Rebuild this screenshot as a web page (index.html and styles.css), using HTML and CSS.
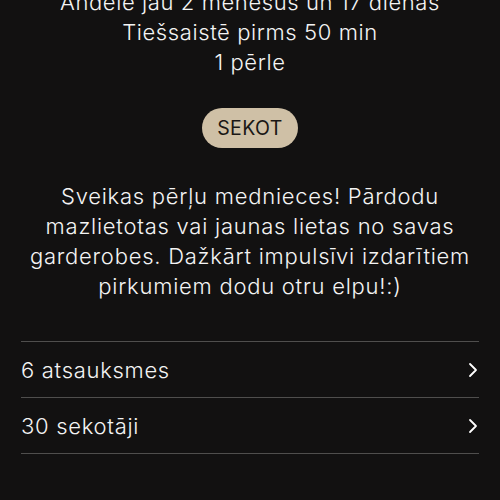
FILE: index.html
```html
<!DOCTYPE html>
<html lang="lv">
<head>
<meta charset="utf-8">
<link rel="stylesheet" href="styles.css">
</head>
<body>
<main class="profile">
  <div class="meta">
    <div>Andelē jau 2 mēnešus un 17 dienas</div>
    <div>Tiešsaistē pirms 50 min</div>
    <div>1 pērle</div>
  </div>
  <button class="follow">SEKOT</button>
  <p class="bio">Sveikas pērļu mednieces! Pārdodu mazlietotas vai jaunas lietas no savas garderobes. Dažkārt impulsīvi izdarītiem pirkumiem dodu otru elpu!:)</p>
  <ul class="links">
    <li class="row"><span>6 atsauksmes</span>
      <svg class="chev" width="10" height="16" viewBox="0 0 10 16"><path d="M2 2 L8 8 L2 14" fill="none" stroke="#fff" stroke-width="1.8" stroke-linecap="round" stroke-linejoin="round"/></svg>
    </li>
    <li class="row"><span>30 sekotāji</span>
      <svg class="chev" width="10" height="16" viewBox="0 0 10 16"><path d="M2 2 L8 8 L2 14" fill="none" stroke="#fff" stroke-width="1.8" stroke-linecap="round" stroke-linejoin="round"/></svg>
    </li>
  </ul>
</main>
</body>
</html>
```
FILE: styles.css
```css
html, body {
  margin: 0;
  padding: 0;
  background: #121111;
  height: 100%;
  overflow: hidden;
}
body {
  font-family: Inter, "Noto Sans", sans-serif;
  font-weight: 300;
  color: #f4f4f4;
}
.profile {
  display: flex;
  flex-direction: column;
  align-items: center;
  padding: 0 21px;
}
.meta {
  margin-top: -13px;
  font-size: 22px;
  letter-spacing: 0.6px;
  line-height: 30px;
  text-align: center;
  white-space: nowrap;
}
.follow {
  margin-top: 31px;
  width: 96px;
  height: 40px;
  border: none;
  border-radius: 20px;
  background: #cfc0a6;
  color: #1a1715;
  font-family: Inter, sans-serif;
  font-weight: 400;
  font-size: 19.5px;
  letter-spacing: 0.4px;
  padding: 0;
}
.bio {
  margin: 33px 0 0;
  font-size: 22px;
  letter-spacing: 0.75px;
  line-height: 30px;
  text-align: center;
  width: 458px;
}
.links {
  list-style: none;
  margin: 40px 0 0;
  padding: 0;
  align-self: stretch;
  border-top: 1px solid #4f4e4d;
}
.row {
  display: flex;
  justify-content: space-between;
  align-items: center;
  height: 55px;
  border-bottom: 1px solid #4f4e4d;
  font-size: 22px;
  letter-spacing: 0.7px;
}
.chev {
  margin-right: 1px;
}
```
